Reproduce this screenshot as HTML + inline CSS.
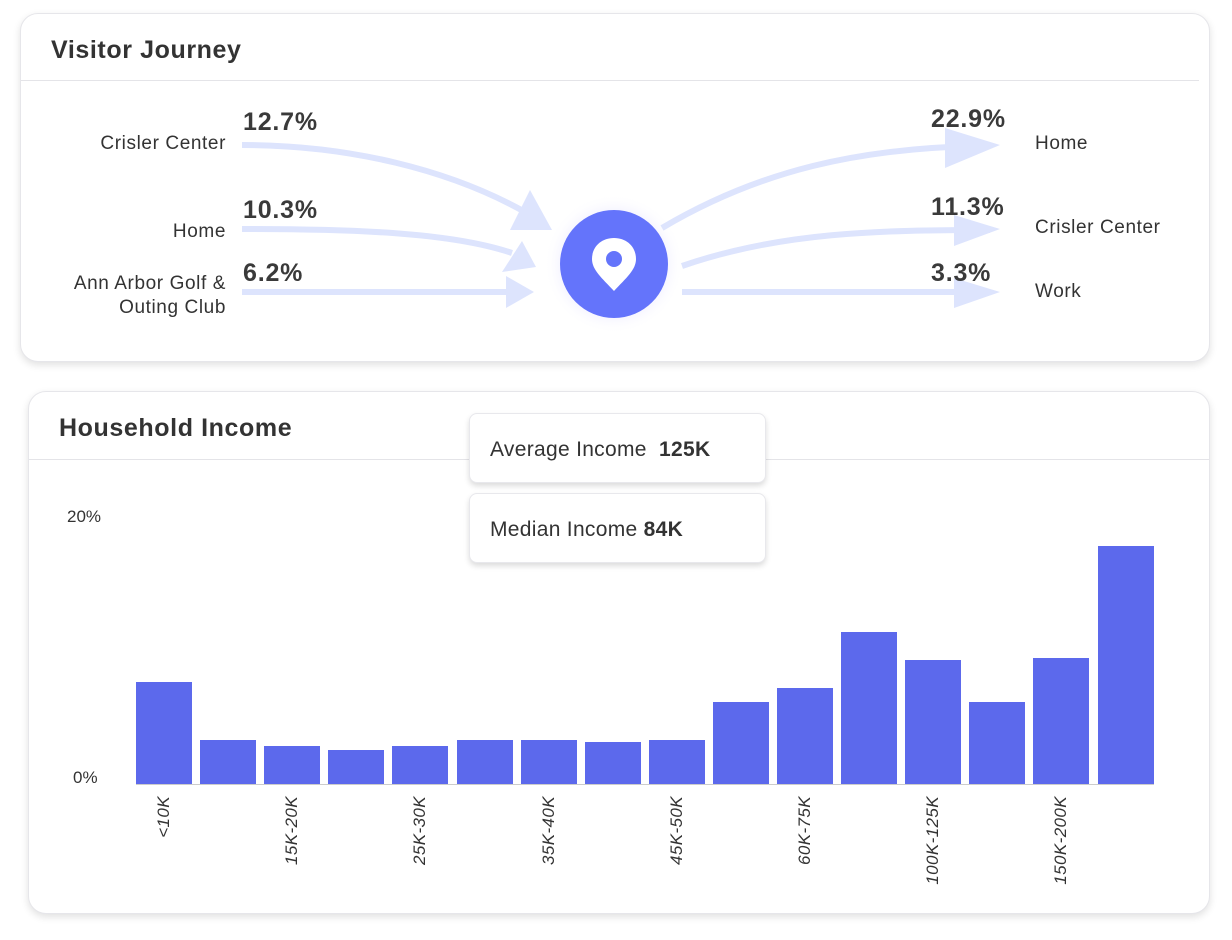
<!DOCTYPE html>
<html><head><meta charset="utf-8"><style>
body{margin:0;width:1232px;height:940px;background:#fff;font-family:"Liberation Sans",sans-serif;position:relative;overflow:hidden}
.card{position:absolute;background:#fff;border-radius:18px;border:1px solid #e6e6ea;box-shadow:0 3px 8px rgba(0,0,0,.12)}
.t{position:absolute;color:#333}
.h{font-size:25px;font-weight:bold;color:#333;letter-spacing:0.6px}
.lbl{font-size:19px;color:#333;position:absolute;letter-spacing:0.6px}
.pct{font-size:25px;font-weight:bold;color:#3a3a3a;position:absolute;letter-spacing:0.8px}
.bar{position:absolute;background:#5c69ec;width:56px;bottom:156px}
.xl{position:absolute;font-size:17px;font-style:italic;color:#333;transform-origin:right top;transform:rotate(-90deg);white-space:nowrap;text-align:right;width:120px;letter-spacing:0.4px}
.pop{position:absolute;background:#fff;border-radius:8px;border:1px solid #e8e8ec;box-shadow:0 3px 6px rgba(0,0,0,.14);font-size:21px;color:#333;padding-left:20px;box-sizing:border-box;line-height:72px;letter-spacing:0.3px}
</style></head><body>
<div class="card" style="left:20px;top:13px;width:1188px;height:347px">
 <div class="t h" style="left:30px;top:22px">Visitor Journey</div>
 <div style="position:absolute;left:0;right:10px;top:66px;border-top:1.5px solid #e4e4e8"></div>
</div>
<svg style="position:absolute;left:0;top:0" width="1232" height="360">
 <defs><radialGradient id="g"><stop offset="0.7" stop-color="#f1f0ff"/><stop offset="1" stop-color="#fff" stop-opacity="0"/></radialGradient></defs>
 <circle cx="614" cy="264" r="70" fill="url(#g)"/>
 <g fill="none" stroke="#dde4fd" stroke-width="6">
  <path d="M242 145 C350 145 450 170 525 212"/>
  <path d="M242 229 C350 229 450 232 512 253"/>
  <path d="M242 292 L510 292"/>
  <path d="M662 228 C760 170 860 148 980 146"/>
  <path d="M682 266 C780 232 880 230 990 230"/>
  <path d="M682 292 L990 292"/>
 </g>
 <g fill="#dde4fd">
  <polygon points="530,190 552,230 510,230"/>
  <polygon points="522,241 536,267 502,272"/>
  <polygon points="506,276 534,292 506,308"/>
  <polygon points="945,128 1000,145 945,168"/>
  <polygon points="954,215 1000,229 954,246"/>
  <polygon points="954,278 1000,292 954,308"/>
 </g>
 <circle cx="614" cy="264" r="54" fill="#6474fb"/>
 <path d="M614 238 C601 238 592 247 592 259 C592 270 602 278 614 291 C626 278 636 270 636 259 C636 247 627 238 614 238Z" fill="#fff"/>
 <circle cx="614" cy="259" r="8" fill="#6474fb"/>
</svg>
<div class="lbl" style="right:1006px;top:133px">Crisler Center</div>
<div class="lbl" style="right:1006px;top:221px">Home</div>
<div class="lbl" style="right:1006px;top:272px;text-align:right;line-height:24px">Ann Arbor Golf &amp;<br>Outing Club</div>
<div class="pct" style="left:243px;top:108px">12.7%</div>
<div class="pct" style="left:243px;top:196px">10.3%</div>
<div class="pct" style="left:243px;top:259px">6.2%</div>
<div class="pct" style="left:931px;top:105px">22.9%</div>
<div class="pct" style="left:931px;top:193px">11.3%</div>
<div class="pct" style="left:931px;top:259px">3.3%</div>
<div class="lbl" style="left:1035px;top:133px">Home</div>
<div class="lbl" style="left:1035px;top:217px">Crisler Center</div>
<div class="lbl" style="left:1035px;top:281px">Work</div>

<div class="card" style="left:28px;top:391px;width:1180px;height:521px">
 <div class="t h" style="left:30px;top:22px">Household Income</div>
 <div style="position:absolute;left:0;right:0;top:67px;border-top:1.5px solid #e4e4e8"></div>
 <div class="t" style="left:38px;top:115px;font-size:17px">20%</div>
 <div class="t" style="left:44px;top:376px;font-size:17px">0%</div>
</div>
<div style="position:absolute;left:136px;top:784px;width:1018px;border-top:1.5px solid #ccc"></div>
<div class="bar" style="left:136px;height:102px"></div>
<div class="bar" style="left:200px;height:44px"></div>
<div class="bar" style="left:264px;height:38px"></div>
<div class="bar" style="left:328px;height:34px"></div>
<div class="bar" style="left:392px;height:38px"></div>
<div class="bar" style="left:457px;height:44px"></div>
<div class="bar" style="left:521px;height:44px"></div>
<div class="bar" style="left:585px;height:42px"></div>
<div class="bar" style="left:649px;height:44px"></div>
<div class="bar" style="left:713px;height:82px"></div>
<div class="bar" style="left:777px;height:96px"></div>
<div class="bar" style="left:841px;height:152px"></div>
<div class="bar" style="left:905px;height:124px"></div>
<div class="bar" style="left:969px;height:82px"></div>
<div class="bar" style="left:1033px;height:126px"></div>
<div class="bar" style="left:1098px;height:238px"></div>
<div class="xl" style="left:34px;top:796px">&lt;10K</div>
<div class="xl" style="left:162px;top:796px">15K-20K</div>
<div class="xl" style="left:290px;top:796px">25K-30K</div>
<div class="xl" style="left:419px;top:796px">35K-40K</div>
<div class="xl" style="left:547px;top:796px">45K-50K</div>
<div class="xl" style="left:675px;top:796px">60K-75K</div>
<div class="xl" style="left:803px;top:796px">100K-125K</div>
<div class="xl" style="left:931px;top:796px">150K-200K</div>

<div class="pop" style="left:469px;top:413px;width:297px;height:70px">Average Income&nbsp; <b>125K</b></div>
<div class="pop" style="left:469px;top:493px;width:297px;height:70px">Median Income&nbsp;<b>84K</b></div>
</body></html>
